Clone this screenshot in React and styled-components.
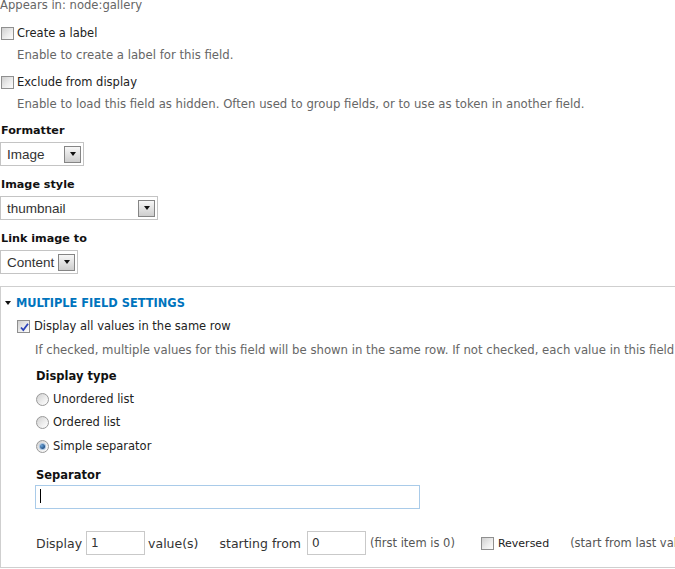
import React from 'react'
import styled, { createGlobalStyle } from 'styled-components'

const GlobalStyle = createGlobalStyle`
  html, body {
    margin: 0;
    padding: 0;
    background: #fff;
    overflow: hidden;
  }
  body {
    font-family: "DejaVu Sans", Verdana, sans-serif;
    font-size: 11px;
    color: #333;
  }
`

const Page = styled.div`
  width: 780px;
`

const Appears = styled.div`
  height: 11px;
  line-height: 11px;
  font-size: 11.6px;
  color: #666;
`

const Item = styled.div`
  margin-top: ${p => p.$top}px;
`

const CheckRow = styled.div`
  display: flex;
  align-items: center;
  height: 18px;
`

const Box = styled.span`
  position: relative;
  flex: none;
  box-sizing: border-box;
  width: 13px;
  height: 13px;
  border: 1px solid #8f8f8f;
  background: linear-gradient(135deg, #cfcfcf 0%, #ececec 55%, #fdfdfd 100%);
  margin-left: 1px;
  svg {
    position: absolute;
    left: 1px;
    top: 1px;
  }
`

const Round = styled.span`
  position: relative;
  flex: none;
  box-sizing: border-box;
  width: 13px;
  height: 13px;
  border-radius: 50%;
  border: 1px solid #999;
  background: linear-gradient(135deg, #d0d0d0 0%, #efefef 60%, #fff 100%);
  display: flex;
  align-items: center;
  justify-content: center;
  &::after {
    content: '';
    display: ${p => (p.$checked ? 'block' : 'none')};
    width: 5px;
    height: 5px;
    border-radius: 50%;
    background: radial-gradient(circle at 35% 35%, #6fa6d8 0%, #1f4f86 70%);
    box-shadow: 0 0 0 1px #a9c6e4;
  }
`

const CheckLabel = styled.span`
  margin-left: ${p => p.$gap || 3}px;
  font-size: ${p => p.$size || 11.5}px;
  color: #222;
  white-space: nowrap;
`

const Desc = styled.div`
  height: 16px;
  line-height: 16px;
  margin-top: ${p => p.$top}px;
  padding-left: ${p => p.$indent}px;
  font-size: 11.7px;
  color: #666;
  white-space: nowrap;
`

const Label = styled.div`
  height: 16px;
  line-height: 16px;
  font-weight: bold;
  font-size: ${p => p.$size || 11.5}px;
  color: #111;
  padding-left: ${p => p.$pad || 0}px;
`

const Select = styled.div`
  margin-top: 3px;
  display: flex;
  align-items: center;
  box-sizing: border-box;
  width: ${p => p.$w}px;
  height: 24px;
  border: 1px solid #c4c4c4;
  padding: 0 2px 0 6px;
  font-family: "Liberation Sans", Arial, sans-serif;
  font-size: 13.5px;
  color: #333;
  background: #fff;
`

const SelectText = styled.span`
  flex: 1;
  white-space: nowrap;
`

const Arrow = styled.span`
  flex: none;
  box-sizing: border-box;
  width: 17px;
  height: 17px;
  border: 1px solid #858585;
  background: linear-gradient(#f7f7f7, #cdcdcd);
  display: flex;
  align-items: center;
  justify-content: center;
  &::after {
    content: '';
    border-left: 3.5px solid transparent;
    border-right: 3.5px solid transparent;
    border-top: 4px solid #111;
  }
`

const Fieldset = styled.div`
  margin-top: 12px;
  box-sizing: border-box;
  width: 760px;
  height: 282px;
  border: 1px solid #cfcfcf;
  padding-top: 8px;
`

const Legend = styled.div`
  display: flex;
  align-items: center;
  height: 16px;
  padding-left: 4px;
  color: #0074bd;
  font-weight: bold;
  font-size: 11.4px;
  text-transform: uppercase;
  &::before {
    content: '';
    margin-right: 5px;
    border-left: 3px solid transparent;
    border-right: 3px solid transparent;
    border-top: 4px solid #111;
  }
`

const FieldsetBody = styled.div`
  padding-left: 15px;
`

const Indent = styled.div`
  padding-left: 20px;
`

const TextField = styled.div`
  margin-top: 2px;
  box-sizing: border-box;
  width: 385px;
  height: 24px;
  margin-left: -1px;
  border: 1px solid #a9cbe9;
  padding: 3px 0 0 4px;
`

const Caret = styled.span`
  display: block;
  width: 1px;
  height: 14px;
  background: #000;
`

const BottomRow = styled.div`
  margin-top: 22px;
  display: flex;
  align-items: center;
  height: 24px;
  white-space: nowrap;
  font-size: 12.5px;
`

const Word = styled.span`
  margin-left: ${p => p.$gap || 0}px;
  font-size: ${p => (p.$muted ? '11.5px' : 'inherit')};
  color: ${p => (p.$muted ? '#555' : '#333')};
`

const Reverse = styled.span`
  margin-left: ${p => p.$gap}px;
  display: inline-flex;
  align-items: center;
`

const SmallInput = styled.span`
  margin-left: ${p => p.$gap}px;
  box-sizing: border-box;
  width: 59px;
  height: 24px;
  border: 1px solid #c9c9c9;
  padding-left: 4px;
  line-height: 22px;
  font-size: 12px;
  color: #333;
`

function Check({ checked }) {
  return (
    <Box>
      {checked && (
        <svg width="11" height="11" viewBox="0 0 11 11">
          <path d="M2 5.5 L4.3 8 L9 1.8" fill="none" stroke="#2b43b8" strokeWidth="1.8" />
        </svg>
      )}
    </Box>
  )
}

function Dropdown({ width, value }) {
  return (
    <Select $w={width}>
      <SelectText>{value}</SelectText>
      <Arrow />
    </Select>
  )
}

export default function App() {
  return (
    <Page>
      <GlobalStyle />
      <Appears>Appears in: node:gallery</Appears>

      <Item $top={13}>
        <CheckRow>
          <Check />
          <CheckLabel>Create a label</CheckLabel>
        </CheckRow>
        <Desc $top={5} $indent={17}>Enable to create a label for this field.</Desc>
      </Item>

      <Item $top={10}>
        <CheckRow>
          <Check />
          <CheckLabel>Exclude from display</CheckLabel>
        </CheckRow>
        <Desc $top={5} $indent={17}>
          Enable to load this field as hidden. Often used to group fields, or to use as token in another field.
        </Desc>
      </Item>

      <Item $top={11}>
        <Label $pad={1} $size={11.2}>Formatter</Label>
        <Dropdown width={84} value="Image" />
      </Item>

      <Item $top={11}>
        <Label $pad={1} $size={11.2}>Image style</Label>
        <Dropdown width={158} value="thumbnail" />
      </Item>

      <Item $top={11}>
        <Label $pad={1} $size={11.2}>Link image to</Label>
        <Dropdown width={78} value="Content" />
      </Item>

      <Fieldset>
        <Legend>Multiple field settings</Legend>
        <FieldsetBody>
          <Item $top={6}>
            <CheckRow>
              <Check checked />
              <CheckLabel $gap={4}>Display all values in the same row</CheckLabel>
            </CheckRow>
            <Desc $top={7} $indent={19}>
              If checked, multiple values for this field will be shown in the same row. If not checked, each value in this field will be shown on a new row.
            </Desc>
          </Item>

          <Indent>
            <Item $top={10}>
              <Label>Display type</Label>
            </Item>
            <Item $top={6}>
              <CheckRow>
                <Round />
                <CheckLabel $gap={4}>Unordered list</CheckLabel>
              </CheckRow>
            </Item>
            <Item $top={5}>
              <CheckRow>
                <Round />
                <CheckLabel $gap={4}>Ordered list</CheckLabel>
              </CheckRow>
            </Item>
            <Item $top={6}>
              <CheckRow>
                <Round $checked />
                <CheckLabel $gap={4}>Simple separator</CheckLabel>
              </CheckRow>
            </Item>

            <Item $top={12}>
              <Label>Separator</Label>
              <TextField>
                <Caret />
              </TextField>
            </Item>

            <BottomRow>
              <Word>Display</Word>
              <SmallInput $gap={4}>1</SmallInput>
              <Word $gap={3}>value(s)</Word>
              <Word $gap={21}>starting from</Word>
              <SmallInput $gap={6}>0</SmallInput>
              <Word $gap={4} $muted>(first item is 0)</Word>
              <Reverse $gap={25}>
                <Check />
                <CheckLabel $gap={4} $size={11}>Reversed</CheckLabel>
              </Reverse>
              <Word $gap={21} $muted>(start from last values)</Word>
            </BottomRow>
          </Indent>
        </FieldsetBody>
      </Fieldset>
    </Page>
  )
}
